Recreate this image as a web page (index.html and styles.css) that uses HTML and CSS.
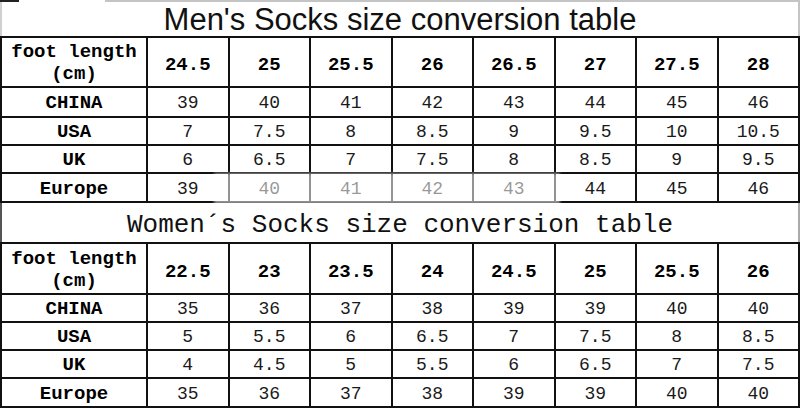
FILE: index.html
```html
<!DOCTYPE html>
<html>
<head>
<meta charset="utf-8">
<link rel="stylesheet" href="styles.css">
</head>
<body>
<div class="sheet">
  <div class="title title-men">Men's Socks size conversion table</div>
  <div class="grid grid-men">
    <div class="cell head label">foot length<br>(cm)</div>
    <div class="cell head">24.5</div><div class="cell head">25</div><div class="cell head">25.5</div><div class="cell head">26</div><div class="cell head">26.5</div><div class="cell head">27</div><div class="cell head">27.5</div><div class="cell head">28</div>
    <div class="cell label r1">CHINA</div>
    <div class="cell r1">39</div><div class="cell r1">40</div><div class="cell r1">41</div><div class="cell r1">42</div><div class="cell r1">43</div><div class="cell r1">44</div><div class="cell r1">45</div><div class="cell r1">46</div>
    <div class="cell label">USA</div>
    <div class="cell">7</div><div class="cell">7.5</div><div class="cell">8</div><div class="cell">8.5</div><div class="cell">9</div><div class="cell">9.5</div><div class="cell">10</div><div class="cell">10.5</div>
    <div class="cell label">UK</div>
    <div class="cell">6</div><div class="cell">6.5</div><div class="cell">7</div><div class="cell">7.5</div><div class="cell">8</div><div class="cell">8.5</div><div class="cell">9</div><div class="cell">9.5</div>
    <div class="cell label">Europe</div>
    <div class="cell">39</div><div class="cell">40</div><div class="cell">41</div><div class="cell">42</div><div class="cell">43</div><div class="cell">44</div><div class="cell">45</div><div class="cell">46</div>
    <div class="watermark"></div>
  </div>
  <div class="title title-women">Women´s Socks size conversion table</div>
  <div class="grid grid-women">
    <div class="cell head label">foot length<br>(cm)</div>
    <div class="cell head">22.5</div><div class="cell head">23</div><div class="cell head">23.5</div><div class="cell head">24</div><div class="cell head">24.5</div><div class="cell head">25</div><div class="cell head">25.5</div><div class="cell head">26</div>
    <div class="cell label">CHINA</div>
    <div class="cell">35</div><div class="cell">36</div><div class="cell">37</div><div class="cell">38</div><div class="cell">39</div><div class="cell">39</div><div class="cell">40</div><div class="cell">40</div>
    <div class="cell label">USA</div>
    <div class="cell">5</div><div class="cell">5.5</div><div class="cell">6</div><div class="cell">6.5</div><div class="cell">7</div><div class="cell">7.5</div><div class="cell">8</div><div class="cell">8.5</div>
    <div class="cell label">UK</div>
    <div class="cell">4</div><div class="cell">4.5</div><div class="cell">5</div><div class="cell">5.5</div><div class="cell">6</div><div class="cell">6.5</div><div class="cell">7</div><div class="cell">7.5</div>
    <div class="cell label">Europe</div>
    <div class="cell">35</div><div class="cell">36</div><div class="cell">37</div><div class="cell">38</div><div class="cell">39</div><div class="cell">39</div><div class="cell">40</div><div class="cell">40</div>
  </div>
</div>
</body>
</html>
```
FILE: styles.css
```css
html, body {
  margin: 0;
  padding: 0;
  background: #fff;
}
.sheet {
  width: 800px;
  height: 409px;
  overflow: hidden;
  background: #fff;
}
.title {
  display: flex;
  align-items: center;
  justify-content: center;
  box-sizing: border-box;
  color: #111;
  white-space: nowrap;
}
.title-men {
  position: relative;
  height: 36px;
  border-top: 2px solid #c4c4c4;
  border-left: 2px solid #d0d0d0;
  border-right: 2px solid #c4c4c4;
  font-family: "Liberation Sans", Arial, sans-serif;
  font-size: 31px;
  padding-top: 1px;
}
.title-men::before {
  content: "";
  position: absolute;
  left: -2px;
  top: -2px;
  width: 19px;
  height: 2px;
  background: #222;
}
.title-men::after {
  content: "";
  position: absolute;
  left: 17px;
  top: -2px;
  width: 86px;
  height: 2px;
  background: #fff;
}
.title-women {
  height: 39px;
  border-left: 2px solid #555;
  border-right: 2px solid #aaa;
  font-family: "Liberation Mono", "DejaVu Sans Mono", monospace;
  font-size: 26px;
  padding-top: 4px;
}
.grid {
  position: relative;
  display: grid;
  grid-template-columns: 144px repeat(8, 1fr);
  gap: 2px;
  padding: 2px;
  background: #111;
  box-sizing: border-box;
  width: 800px;
}
.grid-men {
  grid-template-rows: 48px 28px 26px 26px 27px;
}
.grid-women {
  grid-template-rows: 49px 26px 26px 26px 27px;
}
.cell {
  background: #fff;
  display: flex;
  align-items: center;
  justify-content: center;
  font-family: "Liberation Mono", "DejaVu Sans Mono", monospace;
  font-size: 18px;
  color: #1a1a1a;
  padding-top: 2px;
  box-sizing: border-box;
}
.cell.head {
  font-weight: bold;
  font-size: 19px;
  color: #000;
  padding-top: 6px;
}
.cell.label {
  font-weight: bold;
  font-size: 19px;
  color: #000;
  text-align: center;
}
.cell.head.label {
  line-height: 22px;
  padding-top: 2px;
}
.watermark {
  position: absolute;
  left: 214px;
  top: 137px;
  width: 346px;
  height: 31px;
  background: rgba(255, 255, 255, 0.55);
  filter: blur(1.5px);
}
```
